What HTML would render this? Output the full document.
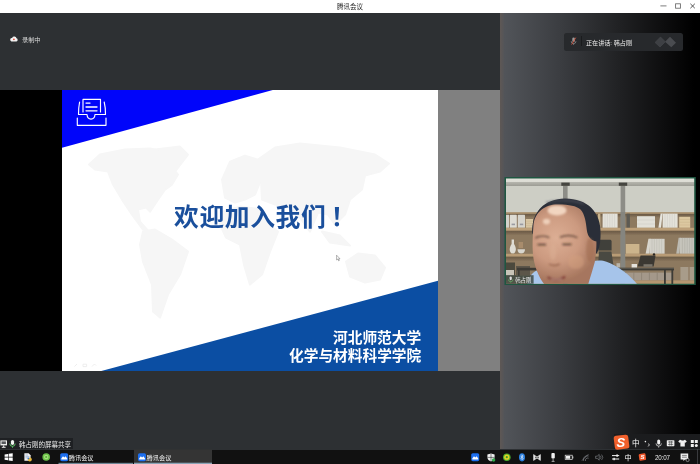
<!DOCTYPE html>
<html lang="zh">
<head>
<meta charset="utf-8">
<title>腾讯会议</title>
<style>
html,body{margin:0;padding:0;}
body{width:700px;height:464px;overflow:hidden;background:#2d3033;position:relative;font-family:"Liberation Sans","Noto Sans CJK SC",sans-serif;}
.abs{position:absolute;}
.abs{will-change:transform;}
#titlebar{left:0;top:0;width:700px;height:13px;background:#fff;}
#title{left:300px;width:100px;top:2px;text-align:center;font-size:6.5px;line-height:9px;color:#222;}
#main{left:0;top:13px;width:500px;height:436px;background:#2d3033;}
#blackL{left:0;top:90.4px;width:62px;height:280.8px;background:#000;}
#slide{left:62px;top:90.4px;width:376px;height:280.8px;background:#fff;overflow:hidden;}
#grayR{left:438px;top:90.4px;width:62px;height:280.8px;background:#808080;}
#right{left:500px;top:13px;width:200px;height:436px;background:linear-gradient(90deg,#53565b 0%,#3b3d41 30%,#202123 60%,#0d0d0e 82%,#000 97%);}
#rightedge{left:500px;top:13px;width:5px;height:436px;background:linear-gradient(90deg,rgba(96,88,84,0.9),rgba(90,86,84,0));}
#rec{left:22.4px;top:34.6px;font-size:6.2px;line-height:9px;color:#d8d8d8;}
#pill{left:564px;top:32.5px;width:119px;height:17.5px;border-radius:2.5px;background:#27292c;}
#pilltxt{left:585.6px;top:37.8px;font-size:6.1px;line-height:9px;color:#eee;white-space:nowrap;}
#pillsep{left:581px;top:36px;width:0.7px;height:10px;background:#1a1b1d;}
#welcome{left:112.3px;top:113px;letter-spacing:0.6px;font-size:24.8px;line-height:30px;font-weight:bold;color:#1a4f9c;white-space:nowrap;}
.org{right:16.8px;text-align:right;font-size:14.7px;line-height:18px;font-weight:bold;color:#fff;white-space:nowrap;}
#sharebar{left:0;top:438.3px;width:73px;height:11.2px;background:#1e2023;}
#sharetxt{left:18.6px;top:439.8px;font-size:6.5px;line-height:9.5px;color:#e8e8e8;white-space:nowrap;}
#taskbar{left:0;top:449.5px;width:700px;height:14.5px;background:#111111;}
.tbtxt{font-size:6.3px;line-height:9px;color:#f0f0f0;top:452px;white-space:nowrap;}
#ime{left:614px;top:434px;width:86px;height:14.5px;background:#1b1c1e;}
</style>
</head>
<body>
<div class="abs" id="titlebar"></div>
<div class="abs" id="title">腾讯会议</div>
<svg class="abs" style="left:655px;top:0" width="45" height="13" viewBox="0 0 45 13">
  <path d="M5.4 5.9H11.5" stroke="#666" stroke-width="0.85" fill="none"/>
  <rect x="20.6" y="3.8" width="4.8" height="4.4" stroke="#666" stroke-width="0.85" fill="none"/>
  <path d="M35.4 3.8L39.8 8.2M39.8 3.8L35.4 8.2" stroke="#444" stroke-width="0.9" fill="none"/>
</svg>

<div class="abs" id="main"></div>
<div class="abs" id="right"></div>
<div class="abs" id="rightedge"></div>

<!-- recording indicator -->
<svg class="abs" style="left:9px;top:35px" width="10" height="8" viewBox="0 0 10 8">
  <path d="M2.4 6.4H7.4A1.6 1.6 0 0 0 7.5 3.3A2.3 2.3 0 0 0 3.1 2.9A1.8 1.8 0 0 0 2.4 6.4Z" fill="#f2f2f2"/>
  <circle cx="4.9" cy="4.3" r="0.9" fill="#e24a3c"/>
</svg>
<div class="abs" id="rec">录制中</div>

<!-- shared screen -->
<div class="abs" id="blackL"></div>
<div class="abs" id="grayR"></div>
<div class="abs" id="slide">
  <svg class="abs" style="left:0;top:0" width="376" height="281" viewBox="0 0 376 281">
    <g id="worldmap" fill="#f6f6f6" stroke="#f6f6f6" stroke-width="2" stroke-linejoin="round" transform="translate(-62,-90.4)">
      <path d="M89,165 L100,155 L125,150 L150,149 L165,152 L170,165 L178,175 L172,185 L165,190 L158,200 L150,212 L146,208 L138,210 L140,222 L148,231 L143,230 L132,215 L122,200 L113,185 L108,172 L95,170 Z"/>
      <path d="M155,150 L180,147 L188,155 L175,172 L162,165 Z"/>
      <path d="M143,232 L155,230 L172,240 L188,252 L180,275 L168,295 L160,318 L153,312 L152,285 L143,262 L140,245 Z"/>
      <path d="M222,180 L230,162 L245,156 L258,160 L261,180 L255,195 L245,200 L235,203 L225,198 Z"/>
      <path d="M222,212 L240,207 L262,210 L268,225 L278,232 L270,252 L262,275 L250,285 L244,265 L240,245 L226,238 L220,225 Z"/>
      <path d="M258,160 L275,148 L300,144 L340,148 L375,155 L389,164 L380,172 L365,176 L362,190 L350,200 L345,215 L335,225 L328,215 L318,213 L310,232 L300,218 L290,208 L275,205 L262,200 L261,180 Z"/>
      <path d="M322,232 L340,236 L350,246 L330,243 Z"/>
      <path d="M346,262 L358,254 L375,256 L385,268 L380,280 L365,283 L350,277 Z"/>
    </g>
    <path d="M274.6 165.2V170L275.8 169L276.6 170.8L277.3 170.5L276.5 168.8H278Z" fill="#fff" stroke="#444" stroke-width="0.4"/>
    <polygon points="0,0 210.8,0 0,57.7" fill="#0005fa"/>
    <polygon points="376,190.7 376,281 39.3,281" fill="#0b4ea3"/>
    <path d="M12.5 276.5L15 274M21 274.2H24.6V276.6H21ZM30 276.5L32.5 274L34 275.5" stroke="#e6e6e6" stroke-width="0.7" fill="none"/>
    <g fill="none" stroke="#fff" stroke-width="1.15" stroke-linejoin="round" stroke-linecap="round">
      <path d="M21 22V9.4H38.5V22"/>
      <path d="M17.6 12C16.8 16 16.5 20 16.5 24.5H25C25.4 30.6 32.6 30.6 33 24.5H43.5C43.5 20 43.2 16 42.2 12"/>
      <path d="M15.3 28V35.3H44V28"/>
      <path d="M24 13.1H28" stroke-width="1.3"/>
      <path d="M24 17H35" stroke-width="1.3"/>
      <path d="M24 20.8H35" stroke-width="1.3"/>
    </g>
  </svg>
  <div class="abs" id="welcome">欢迎加入我们<span style="position:relative;left:4.4px">！</span></div>
  <div class="abs org" style="top:238.5px">河北师范大学</div>
  <div class="abs org" style="top:256.5px">化学与材料科学学院</div>
</div>

<!-- speaking pill -->
<div class="abs" id="pill"></div>
<div class="abs" id="pillsep"></div>
<div class="abs" id="pilltxt">正在讲话: 韩占刚</div>
<svg class="abs" style="left:568px;top:35px" width="12" height="12" viewBox="0 0 12 12">
  <rect x="4.3" y="2.5" width="2.6" height="4.6" rx="1.3" fill="#9a9a9a"/>
  <path d="M3.2 6.2A2.4 2.4 0 0 0 8 6.2M5.6 8.6V9.8" stroke="#9a9a9a" stroke-width="0.7" fill="none"/>
  <path d="M7.8 2.6L3.6 9.6" stroke="#d0543f" stroke-width="0.9"/>
</svg>
<svg class="abs" style="left:654px;top:36px" width="23" height="12" viewBox="0 0 23 12">
  <path d="M0.8 6.5L6.5 0.8L11.3 5.6L16 0.8L22 6.8L17.3 11.2L11.3 6L6 11.2Z" fill="#4a4c50"/>
  <path d="M6.5 0.8L11.3 5.6L6 11.2L0.8 6.5Z" fill="#3e4044"/>
</svg>

<!-- VIDEO -->
<svg class="abs" style="left:504px;top:176px" width="193" height="110" viewBox="504 176 193 110">
  <defs>
    <clipPath id="vclip"><rect x="506" y="178.4" width="188.2" height="105.4"/></clipPath>
    <filter id="b1" x="-5%" y="-5%" width="110%" height="110%"><feGaussianBlur stdDeviation="0.45"/></filter>
    <linearGradient id="shsh" x1="0" y1="0" x2="0" y2="1"><stop offset="0" stop-color="#3a2e22" stop-opacity="0.45"/><stop offset="1" stop-color="#3a2e22" stop-opacity="0"/></linearGradient>
    <filter id="b2" x="-20%" y="-20%" width="140%" height="140%"><feGaussianBlur stdDeviation="1.2"/></filter>
    <filter id="b3" x="-30%" y="-30%" width="160%" height="160%"><feGaussianBlur stdDeviation="2.5"/></filter>
    <linearGradient id="ceil" x1="0" y1="0" x2="0" y2="1"><stop offset="0" stop-color="#e2e2dc"/><stop offset="0.45" stop-color="#dcdcd4"/><stop offset="0.55" stop-color="#b4b4ac"/><stop offset="1" stop-color="#9c9c94"/></linearGradient>
    <radialGradient id="skinr" gradientUnits="userSpaceOnUse" cx="556" cy="238" r="44"><stop offset="0" stop-color="#dcae94"/><stop offset="0.55" stop-color="#cc9a80"/><stop offset="1" stop-color="#a6765e"/></radialGradient>
    <filter id="b4" x="-10%" y="-10%" width="120%" height="120%"><feGaussianBlur stdDeviation="0.6"/></filter>
  </defs>
  <rect x="504.5" y="177" width="191.3" height="108" fill="#1f5641"/>
  <g clip-path="url(#vclip)">
   <g filter="url(#b1)">
    <!-- wall -->
    <rect x="505" y="178" width="191" height="107" fill="#cdcec5"/>
    <rect x="505" y="178" width="191" height="8" fill="url(#ceil)"/>
    <!-- shelf back -->
    <rect x="505" y="212.4" width="191" height="73" fill="#8d795f"/>
    <rect x="505" y="212.4" width="191" height="1.4" fill="#b59a74"/>
    <!-- posts -->
    <rect x="563" y="184" width="4.6" height="101" fill="#8d8d87"/>
    <rect x="561.3" y="182.6" width="8.4" height="3.2" fill="#45443f"/>
    <rect x="620.6" y="184" width="4.6" height="101" fill="#8d8d87"/>
    <rect x="618.8" y="182.6" width="8.4" height="3.2" fill="#45443f"/>
    <rect x="505" y="213.8" width="191" height="4" fill="url(#shsh)"/>
    <rect x="505" y="230.6" width="191" height="5" fill="url(#shsh)"/>
    <rect x="505" y="256.5" width="191" height="5" fill="url(#shsh)"/>
    <!-- row1 items -->
    <rect x="506" y="214.8" width="3" height="13" fill="#d4d2ca"/>
    <rect x="509.8" y="214.8" width="7" height="13" rx="0.6" fill="#dddbd3"/>
    <rect x="517.8" y="214.8" width="7.2" height="13" rx="0.6" fill="#d6d4cc"/>
    <rect x="511.6" y="223.6" width="3.4" height="1.6" fill="#9a9aa0"/>
    <rect x="519.8" y="223.6" width="3.4" height="1.6" fill="#9a9aa0"/>
    <rect x="525.8" y="219" width="7.2" height="8.8" fill="#d9c6a2"/>
    <path d="M525.8 221.2H533M525.8 223.4H533M525.8 225.6H533" stroke="#c4ae86" stroke-width="0.4"/>
    <rect x="598" y="213.8" width="2.4" height="14" fill="#c9b48e"/>
    <rect x="602.6" y="213.6" width="15" height="14.2" fill="#e4e2da"/>
    <path d="M605 213.6V227.8M607.4 213.6V227.8M609.8 213.6V227.8M612.2 213.6V227.8M614.6 213.6V227.8" stroke="#c8c6be" stroke-width="0.4"/>
    <rect x="626.5" y="213.6" width="3.4" height="14.2" fill="#5d5a52"/>
    <rect x="637" y="216.2" width="18" height="11.6" fill="#e2e0d8"/>
    <path d="M637 220H655M637 224H655" stroke="#c4c2ba" stroke-width="0.4"/>
    <path d="M658.4 227.8L660.6 213.6H662.6L661 227.8Z" fill="#e6e4dc"/>
    <rect x="662.6" y="213.6" width="15" height="14.2" fill="#e4e2da"/>
    <path d="M665 213.6V227.8M667.4 213.6V227.8M669.8 213.6V227.8M672.2 213.6V227.8M674.6 213.6V227.8" stroke="#c8c6be" stroke-width="0.4"/>
    <rect x="679.2" y="216.8" width="11" height="11" fill="#dcc8a0"/>
    <path d="M679.2 219.5H690.2M679.2 222.3H690.2M679.2 225H690.2" stroke="#c4ae86" stroke-width="0.4"/>
    <!-- row2 items -->
    <path d="M511.5 253.6C508 250 510.5 246 511.6 244V239.5H514V244C515.2 246 517.6 250 514 253.6Z" fill="#dedcd4"/>
    <path d="M517.5 249.2H525C525 252 523.5 253.6 521.2 253.6C519 253.6 517.5 252 517.5 249.2Z" fill="#d8d6ce"/>
    <rect x="518.6" y="242" width="4.4" height="6" fill="#a88c6c"/>
    <rect x="625.8" y="244" width="13.6" height="9.8" fill="#ccb48c"/>
    <path d="M645.6 253.8L648.4 238.8H650.6L649.4 253.8Z" fill="#d8d6ce"/>
    <rect x="649.6" y="238.8" width="15" height="15" fill="#d4d2ca"/>
    <path d="M652 238.8V253.8M654.4 238.8V253.8M656.8 238.8V253.8M659.2 238.8V253.8M661.6 238.8V253.8" stroke="#b4b2aa" stroke-width="0.4"/>
    <path d="M676.2 253.8L678.6 237.8H680.6L679.6 253.8Z" fill="#bcbab2"/>
    <rect x="680" y="237.8" width="15" height="16" fill="#c6c4bc"/>
    <path d="M682.4 237.8V253.8M684.8 237.8V253.8M687.2 237.8V253.8M689.6 237.8V253.8M692 237.8V253.8" stroke="#a4a29a" stroke-width="0.4"/>
    <!-- row3 items -->
    <rect x="506" y="262.5" width="9" height="13" fill="#4c483e"/>
    <rect x="516" y="266" width="14" height="9" fill="#5c564a"/>
    <rect x="506" y="270" width="8" height="5.5" fill="#c8c4b8"/>
    <rect x="680.4" y="267" width="8" height="13.4" fill="#a89c8a"/>
    <rect x="689.6" y="267" width="6" height="13.4" fill="#a89c8a"/>
    <rect x="626" y="272.6" width="46" height="7.8" fill="#a4988a"/>
    <path d="M633.8 272.6V280.4M641.6 272.6V280.4M649.4 272.6V280.4M657.2 272.6V280.4M665 272.6V280.4" stroke="#857a6c" stroke-width="0.6"/>
    <!-- shelf boards -->
    <rect x="505" y="227.8" width="191" height="2.8" fill="#bda079"/>
    <rect x="505" y="253.8" width="191" height="2.7" fill="#b89b75"/>
    <rect x="505" y="280.4" width="191" height="4" fill="#b4966f"/>
    <rect x="563" y="212" width="4.6" height="73" fill="#85857f"/>
    <rect x="620.6" y="212" width="4.6" height="73" fill="#85857f"/>
    <!-- chair -->
    <path d="M598.5 241.5C598.5 240.3 599.3 239.8 600.5 239.8H609.6C610.8 239.8 611.6 240.3 611.6 241.5V250.5H598.5Z" fill="#403f3a"/>
    <path d="M599 251.5H611.4L613.6 266H598Z" fill="#4a4943"/>
    <!-- laptop / cup / table -->
    <path d="M640.6 255.4H655.6L653.6 266.4H637.6Z" fill="#3a3832"/>
    <circle cx="654" cy="254.4" r="1.2" fill="#2a2824"/>
    <rect x="643.5" y="264.2" width="9" height="2.6" fill="#7a746a"/>
    <rect x="631.6" y="264" width="5.4" height="3.8" fill="#e4e2dc"/>
    <rect x="616.5" y="263.2" width="3.6" height="4.6" fill="#b8b4aa"/>
    <rect x="517" y="267.8" width="157" height="2.6" fill="#3c3a35"/>
    <rect x="615" y="267.8" width="59" height="1" fill="#5e5a52"/>
    <rect x="664" y="270" width="1.8" height="14" fill="#3c3a35"/>
    <rect x="671.4" y="270" width="1.8" height="14" fill="#3c3a35"/>
    <rect x="518" y="270" width="1.6" height="14" fill="#3c3a35"/>
   </g>
   <!-- person -->
   <g filter="url(#b4)">
    <path d="M587 263.5C593 260.4 601 259.4 606.5 261.8C618 266 630 275 637.8 285H582Z" fill="#a6c4ea"/>
    <path d="M527 285C528.5 277 532 272.4 537 270.4L546 285Z" fill="#a9c7ec"/>
    <path d="M532.4 234C530.6 212 545 198.4 565 198.4C587.4 198.4 601.4 212 600.6 234C600.4 246 598.6 251 596 254L588 236L580 212L545 208L534.6 232Z" fill="#2c2e37"/>
    <path d="M533.4 226C534.4 211 546 204.6 557 204.4C568 204.2 576 205.6 580.5 209.4C584.6 213.4 586 222 586.8 230C587.6 236.6 591 240.4 596.4 241.6C596.6 246 596 256 594.8 262C592.6 270 590 278 588 285H544.8C540 279 536 270 534.2 262C532 252 532.4 240 533.4 226Z" fill="url(#skinr)"/>
   </g>
   <g filter="url(#b2)">
    <ellipse cx="557" cy="210.4" rx="9.5" ry="5" fill="#f6dcc8" opacity="0.9"/>
    <ellipse cx="546.5" cy="221.6" rx="3.6" ry="2.8" fill="#f8e0cc" opacity="0.75"/>
    <path d="M546 202.6C556 199.6 574 199.8 584 204" stroke="#585a66" stroke-width="1.6" fill="none" opacity="0.6"/>
    <ellipse cx="576" cy="262" rx="8" ry="7" fill="#d4a080" opacity="0.5"/>
    <ellipse cx="590" cy="250" rx="4" ry="12" fill="#a06c50" opacity="0.55"/>
    <ellipse cx="553" cy="252" rx="3.4" ry="8" fill="#dcb094" opacity="0.5"/>
    <path d="M535.4 238C539 235.8 545 235.8 549.4 237.6" stroke="#5a4034" stroke-width="1.5" fill="none" opacity="0.85"/>
    <path d="M560 237.2C565 235.2 572 235.2 577.4 237.6" stroke="#5a4034" stroke-width="1.5" fill="none" opacity="0.85"/>
    <path d="M537.6 244.6H546" stroke="#3a2820" stroke-width="1.4" fill="none" opacity="0.9"/>
    <path d="M562.4 244.4H571.4" stroke="#3a2820" stroke-width="1.4" fill="none" opacity="0.9"/>
    <path d="M549 264C552 266 556 266 559.6 264" stroke="#8c5a44" stroke-width="1.5" fill="none" opacity="0.8"/>
    <path d="M547.6 277C552 280.6 560 280.6 565.2 276.6" stroke="#7c3a34" stroke-width="2.2" fill="none" opacity="0.85"/>
    <path d="M551 279.2H562" stroke="#e8d0c4" stroke-width="0.9" fill="none" opacity="0.7"/>
   </g>
   <!-- name label -->
   <rect x="506" y="275.2" width="27.6" height="9" fill="#3a4640" opacity="0.82"/>
   <rect x="509.6" y="276.4" width="2.2" height="3.8" rx="1.1" fill="#dcdcdc"/>
   <path d="M508.4 279.4A2.3 2.3 0 0 0 513 279.4M510.7 281.6V282.6" stroke="#6cc070" stroke-width="0.6" fill="none"/>
   <text x="515.2" y="281.8" font-family="'Liberation Sans','Noto Sans CJK SC',sans-serif" font-size="5.4" fill="#f0f0f0">韩占刚</text>
  </g>
</svg>
<!-- /VIDEO -->

<!-- share label -->
<div class="abs" id="sharebar"></div>
<div class="abs" id="sharetxt">韩占刚的屏幕共享</div>

<!-- taskbar -->
<div class="abs" id="taskbar"></div>
<div class="abs" id="ime"></div>
<svg class="abs" style="left:0;top:434px" width="700" height="30" viewBox="0 434 700 30" font-family="'Liberation Sans','Noto Sans CJK SC',sans-serif">
  <!-- active task button -->
  <rect x="134" y="449.5" width="78" height="14.5" fill="#343434"/>
  <rect x="58.5" y="462.8" width="74.5" height="1.2" fill="#6f8796"/>
  <rect x="134" y="462.7" width="78" height="1.3" fill="#8aa4b6"/>
  <!-- windows logo -->
  <path d="M4.6 454.4L8 453.9V456.8H4.6ZM8.6 453.8L12.7 453.2V456.8H8.6ZM4.6 457.4H8V460.3L4.6 459.8ZM8.6 457.4H12.7V461L8.6 460.4Z" fill="#fff"/>
  <!-- file icon -->
  <path d="M24.4 453.2H28.6L30.6 455.2V460.8H24.4Z" fill="#f4f4f4"/>
  <path d="M25.4 455H28M25.4 456.4H29.4M25.4 457.8H28" stroke="#6a8fc0" stroke-width="0.5"/>
  <circle cx="29.8" cy="459.4" r="2" fill="#e9b93c"/>
  <circle cx="28.4" cy="458.4" r="0.9" fill="#3f7fd0"/>
  <!-- green browser -->
  <circle cx="46.2" cy="457" r="3.8" fill="#6cc24a"/>
  <circle cx="46.2" cy="457" r="2.2" fill="#a6e07c"/>
  <circle cx="46.2" cy="457" r="1.1" fill="#5ab23c"/>
  <!-- tencent meeting icons -->
  <g id="tmi">
    <rect x="60.2" y="453.2" width="8" height="8" rx="1.6" fill="#1d6ff0"/>
    <path d="M61.3 458.6L63 456.2L64.3 457.6L65.6 456.2L67.2 458.6V459.4H61.3Z" fill="#fff"/>
  </g>
  <g transform="translate(77.8,0)"><rect x="60.2" y="453.2" width="8" height="8" rx="1.6" fill="#1d6ff0"/><path d="M61.3 458.6L63 456.2L64.3 457.6L65.6 456.2L67.2 458.6V459.4H61.3Z" fill="#fff"/></g>
  <g transform="translate(411,0)"><rect x="60.2" y="453.2" width="8" height="8" rx="1.6" fill="#1d6ff0"/><path d="M61.3 458.6L63 456.2L64.3 457.6L65.6 456.2L67.2 458.6V459.4H61.3Z" fill="#fff"/></g>
  <text x="68.8" y="459.6" font-size="6.2" fill="#f4f4f4">腾讯会议</text>
  <text x="146.6" y="459.6" font-size="6.2" fill="#f4f4f4">腾讯会议</text>
  <!-- shield -->
  <path d="M491 453.6L494.6 454.6V457.6C494.6 459.6 493 460.8 491 461.4C489 460.8 487.4 459.6 487.4 457.6V454.6Z" fill="#f0f0f0"/>
  <path d="M491 453.6V461.4M487.4 457.4H494.6" stroke="#111111" stroke-width="0.5"/>
  <circle cx="493.6" cy="460" r="1.7" fill="#2fa84a"/>
  <!-- 360 -->
  <circle cx="506.8" cy="457.2" r="3.8" fill="#4cae30"/>
  <circle cx="506.8" cy="457.2" r="2.6" fill="#e4d424"/>
  <circle cx="506.8" cy="457.2" r="1.1" fill="#3c9c2c"/>
  <!-- bluetooth -->
  <ellipse cx="522" cy="457.3" rx="3" ry="4.1" fill="#2a7fe0"/>
  <path d="M520.6 455.8L523.2 458.6L522 459.8V454.8L523.2 456L520.6 458.8" stroke="#fff" stroke-width="0.55" fill="none"/>
  <!-- bowtie -->
  <path d="M533.6 454.6L537 457L540.4 454.6V460.4L537 458L533.6 460.4Z" fill="#e4e4e4" stroke="#f0f0f0" stroke-width="0.6"/>
  <path d="M535.4 456.6L536.8 457.5L535.4 458.4ZM538.6 456.6L537.2 457.5L538.6 458.4Z" fill="#111"/>
  <!-- usb/mic -->
  <rect x="551.4" y="453" width="3.4" height="5.6" rx="1" fill="#f0f0f0"/>
  <path d="M553.1 458.6V461.4M551.6 461.4H554.6" stroke="#d8d8d8" stroke-width="0.7"/>
  <!-- battery -->
  <rect x="565.2" y="455.2" width="7" height="4.4" fill="none" stroke="#e8e8e8" stroke-width="0.7"/>
  <rect x="566" y="456" width="4.2" height="2.8" fill="#f0f0f0"/>
  <rect x="572.4" y="456.4" width="0.9" height="2" fill="#e8e8e8"/>
  <!-- wifi gray -->
  <path d="M582 460.6L588.4 454.2M583.4 460.8A4 4 0 0 1 588.6 456M585.4 461A2.4 2.4 0 0 1 588.6 458.2" stroke="#84878c" stroke-width="0.7" fill="none"/>
  <!-- volume gray -->
  <path d="M595.6 456.2H597.2L599.2 454.4V460.2L597.2 458.4H595.6Z" fill="none" stroke="#8a8d92" stroke-width="0.6"/>
  <path d="M600.4 455.8A2.4 2.4 0 0 1 600.4 458.8M601.6 454.6A4 4 0 0 1 601.6 460" stroke="#8a8d92" stroke-width="0.6" fill="none"/>
  <!-- arrows -->
  <path d="M612 455.6H619.2M612 459H619.2" stroke="#f4f4f4" stroke-width="1"/>
  <rect x="616.4" y="454.4" width="1.4" height="2.4" fill="#f4f4f4"/>
  <rect x="613.4" y="457.8" width="1.4" height="2.4" fill="#f4f4f4"/>
  <text x="624.6" y="460" font-size="7.2" fill="#fff">中</text>
  <!-- sogou small -->
  <rect x="639" y="453.6" width="6.8" height="6.8" rx="1.2" fill="#f0562a" transform="rotate(-8 642.4 457)"/>
  <text x="640.5" y="459.4" font-size="6" font-weight="bold" fill="#fff" font-style="italic">S</text>
  <text x="655" y="459.6" font-size="6.3" fill="#e8e8e8" letter-spacing="-0.2">20:07</text>
  <!-- notification -->
  <path d="M680.6 453.6H688.2V459.4H685L683.4 461V459.4H680.6Z" fill="#f0f0f0"/>
  <path d="M682 455.4H686.8M682 457.2H686.8" stroke="#111111" stroke-width="0.5"/>
  <circle cx="687.6" cy="460" r="1.6" fill="#111111" stroke="#e0e0e0" stroke-width="0.5"/>
  <rect x="697.2" y="449" width="0.6" height="15" fill="#55585c"/>
  <!-- IME bar -->
  <rect x="614.2" y="435.2" width="14.6" height="14" rx="2.6" fill="#f1602c" transform="rotate(-7 621.5 442)"/>
  <text x="616.6" y="447.2" font-size="13" font-weight="bold" font-style="italic" fill="#fff">S</text>
  <text x="632" y="446.4" font-size="7.6" fill="#fff">中</text>
  <circle cx="645.4" cy="441.6" r="0.8" fill="#f0f0f0"/>
  <path d="M648.6 443.6C649.4 444.4 649.2 445.6 648.2 446.4" stroke="#f0f0f0" stroke-width="0.9" fill="none"/>
  <rect x="657.2" y="439.6" width="3" height="5" rx="1.5" fill="#f0f0f0"/>
  <path d="M656 443.4A2.7 2.7 0 0 0 661.4 443.4M658.7 446.2V447.6" stroke="#f0f0f0" stroke-width="0.7" fill="none"/>
  <rect x="666.8" y="440.2" width="7.6" height="6" rx="0.6" fill="#f0f0f0"/>
  <path d="M668 442H673.2M668 444.4H673.2M669.8 441V445.6M671.6 441V445.6" stroke="#1b1c1e" stroke-width="0.5"/>
  <path d="M680 439.8L682 440.6H683.4L685 439.8L686.8 441.6L685.4 442.8L684.8 442.4V446.6H680.4V442.4L679.6 442.8L678.2 441.6Z" fill="#f0f0f0"/>
  <rect x="690.8" y="440" width="3" height="3" fill="#f0f0f0"/><rect x="694.8" y="440" width="3" height="3" fill="#f0f0f0"/>
  <rect x="690.8" y="444" width="3" height="3" fill="#f0f0f0"/><circle cx="696.3" cy="445.5" r="1.5" fill="#f0f0f0"/>
</svg>
<!-- share bar icons -->
<svg class="abs" style="left:0;top:438px" width="20" height="12" viewBox="0 438 20 12">
  <rect x="0.4" y="440.4" width="6.6" height="5" fill="#ededed"/>
  <rect x="1.5" y="441.4" width="4.4" height="2.6" fill="#55585c"/>
  <path d="M3.7 445.4V447M1.8 447.3H5.6" stroke="#ededed" stroke-width="1"/>
  <rect x="10.9" y="439.9" width="3.2" height="5" rx="1.6" fill="#f0f6f0"/>
  <path d="M9.8 443.6A2.7 2.7 0 0 0 15.2 443.6M12.5 446.3V447.7" stroke="#5cc466" stroke-width="1" fill="none"/>
</svg>
</body>
</html>
